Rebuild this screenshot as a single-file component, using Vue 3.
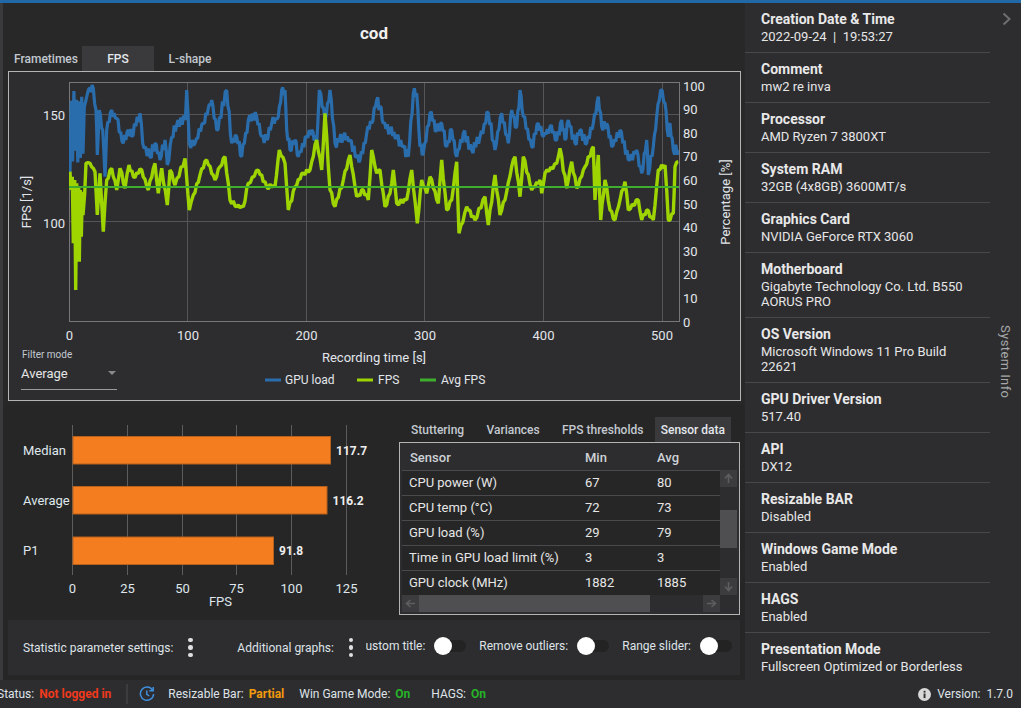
<script setup>
const pts = (arr, ox, oy) => arr.map(([x, y]) => [ox + x / 3, oy + y / 3])
let seed = 11
const rnd = () => { seed = (seed * 16807) % 2147483647; return seed / 2147483647 }
const denseBlue = []
for (let x = 70, i = 0; x < 85; x += 1.3, i++) {
  const floor = x < 74 ? 172 : x < 80 ? 180 : 176 - (x - 80) * 5
  denseBlue.push([x, i % 2 ? 90 + rnd() * 24 : floor - rnd() * 34])
}
const denseGreen = pts([[30,275],[33,330],[37,290],[40,490],[44,300],[47,630],[50,310],[53,420],[56,320],[58,545],[61,330],[64,470],[67,335],[69,405],[74,340]], 60, 80)
const blueRaw = [
  ...denseBlue,
  ...pts([[85,30],[100,25],[108,90],[112,225],[118,90],[128,150],[135,290],[140,150],[155,90],[170,115],[190,190],[205,150],[215,170],[240,100],[248,190],[270,230],[285,190],[300,240],[315,180],[322,255],[335,170],[350,135],[375,120],[380,30],[388,190],[405,190],[430,130],[445,85],[455,60],[470,150]], 60, 80),
  ...pts([[680,270],[695,430],[710,410],[725,470],[745,360],[770,350],[785,410],[800,420],[815,370],[835,350],[845,270],[855,270],[860,390],[870,450],[885,420],[895,470],[920,410],[935,390],[950,430],[958,270],[975,360],[990,270],[1005,430],[1030,410],[1050,420],[1070,470],[1080,480],[1100,400],[1115,370],[1130,300]], 0, 0),
  ...pts([[0,140],[10,190],[30,210],[50,230],[70,260],[85,290],[100,100],[110,100],[120,260],[130,280],[150,160],[170,210],[185,190],[200,260],[215,210],[230,290],[250,220],[275,270],[300,230],[325,160],[345,270],[365,160],[385,250],[395,150],[410,200],[420,90],[430,170],[455,260],[475,190],[490,230],[510,200],[530,240],[545,180],[555,240],[565,180],[585,250],[600,210],[620,250],[640,190],[655,110],[665,200],[680,190],[695,260],[720,210],[745,300],[770,270],[785,340],[800,240],[805,345],[820,260],[830,170],[842,90],[855,130],[865,230],[870,190],[880,270],[895,270]], 380, 60),
]
const greenRaw = [
  ...denseGreen,
  ...pts([[78,250],[90,250],[105,275],[112,405],[120,280],[130,455],[140,300],[155,265],[170,330],[180,265],[195,325],[207,255],[220,290],[245,270],[265,330],[285,250],[295,340],[305,265],[322,375],[330,270],[345,315],[375,235],[388,390],[400,345],[420,285],[440,240],[465,300],[480,260]], 60, 80),
  ...pts([[675,470],[690,600],[710,620],[730,620],[745,550],[775,510],[800,560],[825,560],[838,450],[855,490],[865,630],[885,560],[910,520],[930,510],[950,420],[965,510],[975,340],[990,570],[1005,620],[1030,540],[1050,465],[1070,590],[1090,570],[1105,600],[1115,450],[1130,520]], 0, 0),
  ...pts([[0,330],[15,440],[30,400],[40,330],[50,430],[80,420],[95,330],[112,490],[125,360],[140,400],[150,350],[175,430],[185,300],[200,450],[215,420],[230,305],[237,520],[260,440],[285,480],[315,410],[325,495],[345,345],[360,465],[380,395],[395,320],[405,290],[420,410],[430,290],[455,390],[480,360],[485,400],[495,340],[530,310],[540,265],[560,385],[575,305],[590,385],[615,320],[640,260],[645,420],[655,285],[662,480],[675,360],[690,450],[705,480],[720,420],[735,365],[745,450],[775,420],[785,480],[800,450],[820,480],[835,330],[855,315],[865,480],[880,460],[885,320],[895,305]], 380, 60),
]
const texture = (raw, amp, step, denseEnd) => {
  const out = []
  let sign = 1
  raw.forEach((p, i) => {
    out.push(p)
    const n = raw[i + 1]
    if (!n || p[0] < denseEnd) return
    const steps = Math.max(2, Math.ceil((n[0] - p[0]) / step))
    for (let s = 1; s < steps; s++) {
      const t = s / steps
      sign = -sign
      out.push([p[0] + (n[0] - p[0]) * t, p[1] + (n[1] - p[1]) * t + sign * (0.25 + rnd()) * amp])
    }
  })
  return out.map(([x, y]) => x.toFixed(1) + ',' + y.toFixed(1)).join(' ')
}
const bluePoints = texture(blueRaw, 4.5, 1.5, 85)
const greenPoints = texture(greenRaw, 2.2, 2, 85)

const xGrid = [69.5, 187.5, 306.5, 424.5, 543.5, 662.5]
const xLabels = [[69.5, '0'], [188, '100'], [306.5, '200'], [425, '300'], [543.5, '400'], [662, '500']]
const pctLabels = Array.from({ length: 11 }, (_, i) => ({ t: String(i * 10), y: 326.5 - i * 23.6 }))
const barGrid = [[72.5, '0'], [127.5, '25'], [182.5, '50'], [236.5, '75'], [291.5, '100'], [346.5, '125']]
const bars = [
  { n: 'Median', v: '117.7', y: 436.5, e: 330.5 },
  { n: 'Average', v: '116.2', y: 486.5, e: 327 },
  { n: 'P1', v: '91.8', y: 537, e: 273.5 },
]
const info = [
  ['Creation Date & Time', '2022-09-24\u00a0 |\u00a0 19:53:27'],
  ['Comment', 'mw2 re inva'],
  ['Processor', 'AMD Ryzen 7 3800XT'],
  ['System RAM', '32GB (4x8GB) 3600MT/s'],
  ['Graphics Card', 'NVIDIA GeForce RTX 3060'],
  ['Motherboard', 'Gigabyte Technology Co. Ltd. B550 AORUS PRO'],
  ['OS Version', 'Microsoft Windows 11 Pro Build 22621'],
  ['GPU Driver Version', '517.40'],
  ['API', 'DX12'],
  ['Resizable BAR', 'Disabled'],
  ['Windows Game Mode', 'Enabled'],
  ['HAGS', 'Enabled'],
  ['Presentation Mode', 'Fullscreen Optimized or Borderless'],
]
const rows = [
  ['CPU power (W)', '67', '80'],
  ['CPU temp (°C)', '72', '73'],
  ['GPU load (%)', '29', '79'],
  ['Time in GPU load limit (%)', '3', '3'],
  ['GPU clock (MHz)', '1882', '1885'],
]
const arrow = 'M8.5 13 V5.5 M5 8.5 L8.5 4.5 L12 8.5'
</script>

<template>
  <div class="app">
    <div class="main">
      <div class="left">
        <section class="top">
          <h1 class="title">cod</h1>
          <div class="tabs">
            <span class="tab t1">Frametimes</span>
            <span class="tab t2 active">FPS</span>
            <span class="tab t3">L-shape</span>
          </div>
          <div class="chart-card">
            <svg class="chart" width="731" height="328" viewBox="9 72 731 328">
              <defs>
                <clipPath id="plot"><rect x="69" y="82" width="610" height="240" /></clipPath>
              </defs>
              <g stroke="#555557" stroke-width="1">
                <line v-for="x in xGrid" :key="x" :x1="x" :x2="x" y1="82" y2="321" />
                <line x1="69" x2="679" y1="114.5" y2="114.5" />
                <line x1="69" x2="679" y1="221.5" y2="221.5" />
              </g>
              <rect x="69.5" y="82.5" width="610" height="239" fill="none" stroke="#77777a" />
              <g clip-path="url(#plot)" fill="none" stroke-linejoin="bevel">
                <polyline :points="bluePoints" stroke="#2a6dac" stroke-width="3.2" />
                <polyline :points="greenPoints" stroke="#9ed400" stroke-width="3.4" />
                <line x1="69" x2="679" y1="187" y2="187" stroke="#3fae2f" stroke-width="2" />
              </g>
              <g class="tick">
                <text x="65" y="120" text-anchor="end">150</text>
                <text x="65" y="228" text-anchor="end">100</text>
                <text v-for="l in xLabels" :key="l[1]" :x="l[0]" y="340" text-anchor="middle">{{ l[1] }}</text>
                <text v-for="l in pctLabels" :key="l.t" x="683" :y="l.y">{{ l.t }}</text>
              </g>
              <text class="axis" transform="translate(31 202) rotate(-90)" text-anchor="middle">FPS [1/s]</text>
              <text class="axis" transform="translate(730 202) rotate(-90)" text-anchor="middle">Percentage [%]</text>
              <text class="axis" x="374" y="362" text-anchor="middle">Recording time [s]</text>
              <g class="legend">
                <rect x="265" y="378.5" width="16" height="3" fill="#2a6dac" />
                <text x="285" y="384">GPU load</text>
                <rect x="357" y="378.5" width="16" height="3" fill="#9ed400" />
                <text x="378" y="384">FPS</text>
                <rect x="420" y="378.5" width="16" height="3" fill="#3fae2f" />
                <text x="441" y="384">Avg FPS</text>
              </g>
            </svg>
            <div class="filter">
              <div class="filter-label">Filter mode</div>
              <div class="filter-select">
                <span>Average</span>
                <i class="caret"></i>
              </div>
            </div>
          </div>
        </section>

        <section class="bottom">
          <div class="bar-wrap">
            <svg width="396" height="210" viewBox="3 405 396 210">
              <g stroke="#5c5c5c">
                <line v-for="g in barGrid" :key="g[0]" :x1="g[0]" :x2="g[0]" y1="425" y2="575" />
              </g>
              <g v-for="b in bars" :key="b.n">
                <rect x="73" :y="b.y" :width="b.e - 73" height="27.5" fill="#f47d20" stroke="#b5601c" />
                <text class="bar-name" x="23" :y="b.y + 18">{{ b.n }}</text>
                <text class="bar-val" :x="b.e + 5.5" :y="b.y + 18">{{ b.v }}</text>
              </g>
              <text v-for="g in barGrid" :key="'l' + g[0]" class="bar-tick" :x="g[0]" y="593" text-anchor="middle">{{ g[1] }}</text>
              <text class="bar-tick" x="220.5" y="606" text-anchor="middle">FPS</text>
            </svg>
          </div>
          <div class="table-wrap">
            <div class="tabs2">
              <span class="tab2">Stuttering</span>
              <span class="tab2">Variances</span>
              <span class="tab2">FPS thresholds</span>
              <span class="tab2 active">Sensor data</span>
            </div>
            <div class="table-card">
              <div class="table-head">
                <span class="c1">Sensor</span><span class="c2">Min</span><span class="c3">Avg</span>
              </div>
              <div class="table-mid">
                <div class="table-body">
                  <div v-for="r in rows" :key="r[0]" class="tr">
                    <span class="c1">{{ r[0] }}</span><span class="c2">{{ r[1] }}</span><span class="c3">{{ r[2] }}</span>
                  </div>
                </div>
                <div class="vbar">
                  <svg class="sbtn" viewBox="0 0 17 17"><path :d="arrow" /></svg>
                  <span class="vthumb"></span>
                  <svg class="sbtn rot180" viewBox="0 0 17 17"><path :d="arrow" /></svg>
                </div>
              </div>
              <div class="hbar">
                <svg class="sbtn rotl" viewBox="0 0 17 17"><path :d="arrow" /></svg>
                <span class="hthumb"></span>
                <svg class="sbtn rotr" viewBox="0 0 17 17"><path :d="arrow" /></svg>
              </div>
            </div>
          </div>
        </section>

        <section class="settings">
          <span class="set-label s1">Statistic parameter settings:</span>
          <span class="dots"><i></i><i></i><i></i></span>
          <span class="set-label s2">Additional graphs:</span>
          <span class="dots"><i></i><i></i><i></i></span>
          <div class="toggles">
            <span class="set-label">Custom title:</span><span class="toggle"><i></i></span>
            <span class="set-label">Remove outliers:</span><span class="toggle"><i></i></span>
            <span class="set-label">Range slider:</span><span class="toggle"><i></i></span>
          </div>
        </section>
      </div>

      <aside class="side">
        <div class="side-list">
          <div v-for="i in info" :key="i[0]" class="item">
            <div class="item-title">{{ i[0] }}</div>
            <div class="item-val">{{ i[1] }}</div>
          </div>
        </div>
        <div class="rail">
          <svg class="chev" width="10" height="14" viewBox="0 0 10 14"><path d="M1.5 1.5 L7.5 7 L1.5 12.5" fill="none" stroke="#6f6f72" stroke-width="2" /></svg>
          <span class="rail-text">System Info</span>
        </div>
      </aside>
    </div>

    <footer class="status">
      <span class="st lbl first">Status:</span>
      <b class="red">Not logged in</b>
      <span class="sep"></span>
      <svg class="clock" width="16" height="16" viewBox="0 0 16 16" fill="none" stroke="#3f8fdc" stroke-width="1.5">
        <path d="M13.6 4.2 A6.6 6.6 0 1 0 14.6 8" />
        <path d="M14.2 1 V4.8 H10.4" />
        <path d="M7.8 4.6 V8.4 L10.2 9.8" />
      </svg>
      <span class="st lbl rb">Resizable Bar:</span>
      <b class="orange">Partial</b>
      <span class="st lbl wg">Win Game Mode:</span>
      <b class="green">On</b>
      <span class="st lbl hg">HAGS:</span>
      <b class="green">On</b>
      <span class="spacer"></span>
      <svg class="info" width="13" height="13" viewBox="0 0 13 13">
        <circle cx="6.5" cy="6.5" r="6.5" fill="#d8d8d8" />
        <rect x="5.6" y="5.5" width="1.9" height="4.6" fill="#2d2d30" />
        <rect x="5.6" y="2.8" width="1.9" height="1.8" fill="#2d2d30" />
      </svg>
      <span class="st ver">Version:&nbsp; 1.7.0</span>
    </footer>
  </div>
</template>

<style>
html, body { margin: 0; padding: 0; background: #2d2d30; }
</style>

<style scoped>
.app {
  width: 1021px; height: 708px; box-sizing: border-box; overflow: hidden;
  border-top: 3px solid #2168a6; background: #2d2d30; color: #e6e6e6;
  font-family: Roboto, "Liberation Sans", sans-serif; font-size: 13px;
  display: flex; flex-direction: column;
}
.main { display: flex; height: 677px; flex: none; }
.left { width: 745px; box-sizing: border-box; border-left: 3px solid #3a3a3c; background: #262626; display: flex; flex-direction: column; }
.top { height: 402px; flex: none; box-sizing: border-box; padding: 0 5px; background: #282828; }
.title { margin: 0; height: 43px; box-sizing: border-box; padding-top: 19px; text-align: center; font-size: 17px; line-height: 22px; font-weight: 700; color: #f0f0f0; }
.tabs { display: flex; height: 25px; }
.tab { display: flex; align-items: center; justify-content: center; font-weight: 500; font-size: 12px; color: #c3c9d0; box-sizing: border-box; }
.t1 { width: 74px; padding-left: 2px; }
.t2 { width: 72px; }
.t3 { width: 72px; }
.tab.active { background: #3a3a3c; color: #e4e8ec; }
.chart-card { position: relative; width: 733px; height: 330px; box-sizing: border-box; border: 1px solid #b4b4b4; background: #2d2d30; }
.chart { display: block; }
.tick text { font-size: 13px; fill: #e2e6ea; }
.axis { font-size: 13px; fill: #e2e6ea; }
.legend text { font-size: 12px; fill: #e2e6ea; }
.filter { position: absolute; left: 12px; top: 277px; width: 96px; }
.filter-label { font-size: 10px; line-height: 12px; color: #c3c9d0; margin-left: 1px; }
.filter-select { display: flex; align-items: center; justify-content: space-between; height: 22px; padding-bottom: 5px; border-bottom: 1px solid #9a9a9a; font-size: 13px; color: #e6e6e6; margin-top: 1px; box-sizing: content-box; }
.caret { width: 0; height: 0; border-left: 4px solid transparent; border-right: 4px solid transparent; border-top: 4px solid #8a8a8a; margin-right: 1px; }

.bottom { height: 210px; flex: none; display: flex; background: #262626; }
.bar-wrap { width: 396px; flex: none; }
.bar-wrap svg { display: block; }
.bar-name { font-size: 13px; fill: #dfe6ec; }
.bar-val { font-size: 12px; font-weight: 700; fill: #eeeeee; }
.bar-tick { font-size: 13px; fill: #dfe6ec; }
.table-wrap { width: 341px; margin-top: 12px; }
.tabs2 { display: flex; height: 25px; padding-left: 6px; gap: 10px; margin-right: 9px; justify-content: space-between; }
.tab2 { display: flex; align-items: center; padding: 0 6px; font-size: 12px; font-weight: 500; color: #c3c9d0; }
.tab2.active { background: #3a3a3c; color: #e4e8ec; margin-left: -5px; }
.table-card { width: 341px; height: 173px; box-sizing: border-box; border: 1px solid #b4b4b4; background: #2d2d30; padding: 2px; }
.table-head { display: flex; height: 25px; align-items: center; font-weight: 500; color: #cfd2d6; font-size: 13px; }
.c1 { width: 183px; padding-left: 7px; box-sizing: border-box; white-space: nowrap; }
.c2 { width: 72px; }
.c3 { width: 60px; }
.table-head .c1 { padding-left: 8px; }
.table-mid { display: flex; height: 125px; }
.table-body { width: 318px; background: #262626; }
.tr { display: flex; height: 25px; box-sizing: border-box; border-top: 1px solid #4a4a4c; padding-bottom: 2px; align-items: center; font-size: 13px; color: #e6e6e6; }
.vbar { width: 17px; display: flex; flex-direction: column; justify-content: space-between; position: relative; background: #2d2d30; }
.sbtn { width: 17px; height: 17px; background: #3c3c3e; display: block; flex: none; }
.sbtn path { fill: none; stroke: #5e5e60; stroke-width: 1.6; }
.rot180 { transform: rotate(180deg); }
.rotl { transform: rotate(-90deg); }
.rotr { transform: rotate(90deg); }
.vthumb { position: absolute; left: 0; top: 40px; width: 17px; height: 38px; background: #4f4f51; }
.hbar { display: flex; height: 17px; width: 318px; background: #2d2d30; justify-content: space-between; position: relative; }
.hthumb { position: absolute; left: 17px; top: 0; width: 231px; height: 17px; background: #4f4f51; }

.settings { height: 55px; flex: none; margin: 5px 5px 5px; width: 732px; background: #2d2d30; display: flex; align-items: center; box-sizing: border-box; padding-left: 15px; }
.set-label { font-size: 12px; color: #dfe3e7; white-space: nowrap; }
.dots { display: flex; flex-direction: column; gap: 3px; margin-left: 15px; width: 5px; flex: none; }
.dots i { display: block; width: 4.5px; height: 4.5px; border-radius: 50%; background: #e0e0e0; }
.s2 { margin-left: 44px; }
.toggles { flex: 1; min-width: 0; overflow: hidden; display: flex; justify-content: flex-end; align-items: center; gap: 0; margin-left: 12px; height: 30px; padding-right: 8px; margin-top: -3px; }
.toggle { position: relative; flex: none; width: 32px; height: 12px; border-radius: 6px; background: #232323; margin-left: 9px; margin-right: 13px; }
.toggle:last-child { margin-right: 0; }
.toggle i { position: absolute; left: 0; top: -3px; width: 18px; height: 18px; border-radius: 50%; background: #fff; }

.side { width: 276px; display: flex; background: #2d2d30; }
.side-list { width: 245px; flex: none; }
.item { padding: 8px 0 8px 16px; border-bottom: 1px solid #48484a; }
.item:last-child { border-bottom: 0; }
.item-title { font-size: 14px; line-height: 17px; margin-bottom: 1px; font-weight: 700; color: #e8e8e8; white-space: nowrap; }
.item-val { font-size: 13px; line-height: 15px; color: #e6e6e6; padding-right: 6px; }
.rail { flex: 1; position: relative; display: flex; flex-direction: column; align-items: center; }
.chev { margin-top: 9px; margin-left: 2px; }
.rail-text { writing-mode: vertical-rl; font-size: 13px; letter-spacing: 0.4px; color: #a8a8a8; margin-top: 299px; }

.status { height: 28px; flex: none; display: flex; align-items: center; background: #2d2d30; font-size: 12px; color: #dfe3e7; }
.status b { font-weight: 700; margin-left: 5px; }
.first { margin-left: -3px; }
.red { color: #f0391b; }
.orange { color: #f29a0c; }
.green { color: #27b327; }
.sep { width: 2px; height: 20px; background: #3c3c3e; margin-left: 15px; }
.clock { margin-left: 11px; }
.rb { margin-left: 13px; }
.wg { margin-left: 15px; }
.hg { margin-left: 21px; }
.spacer { flex: 1; }
.info { margin-right: 6px; }
.ver { margin-right: 8px; }
</style>
